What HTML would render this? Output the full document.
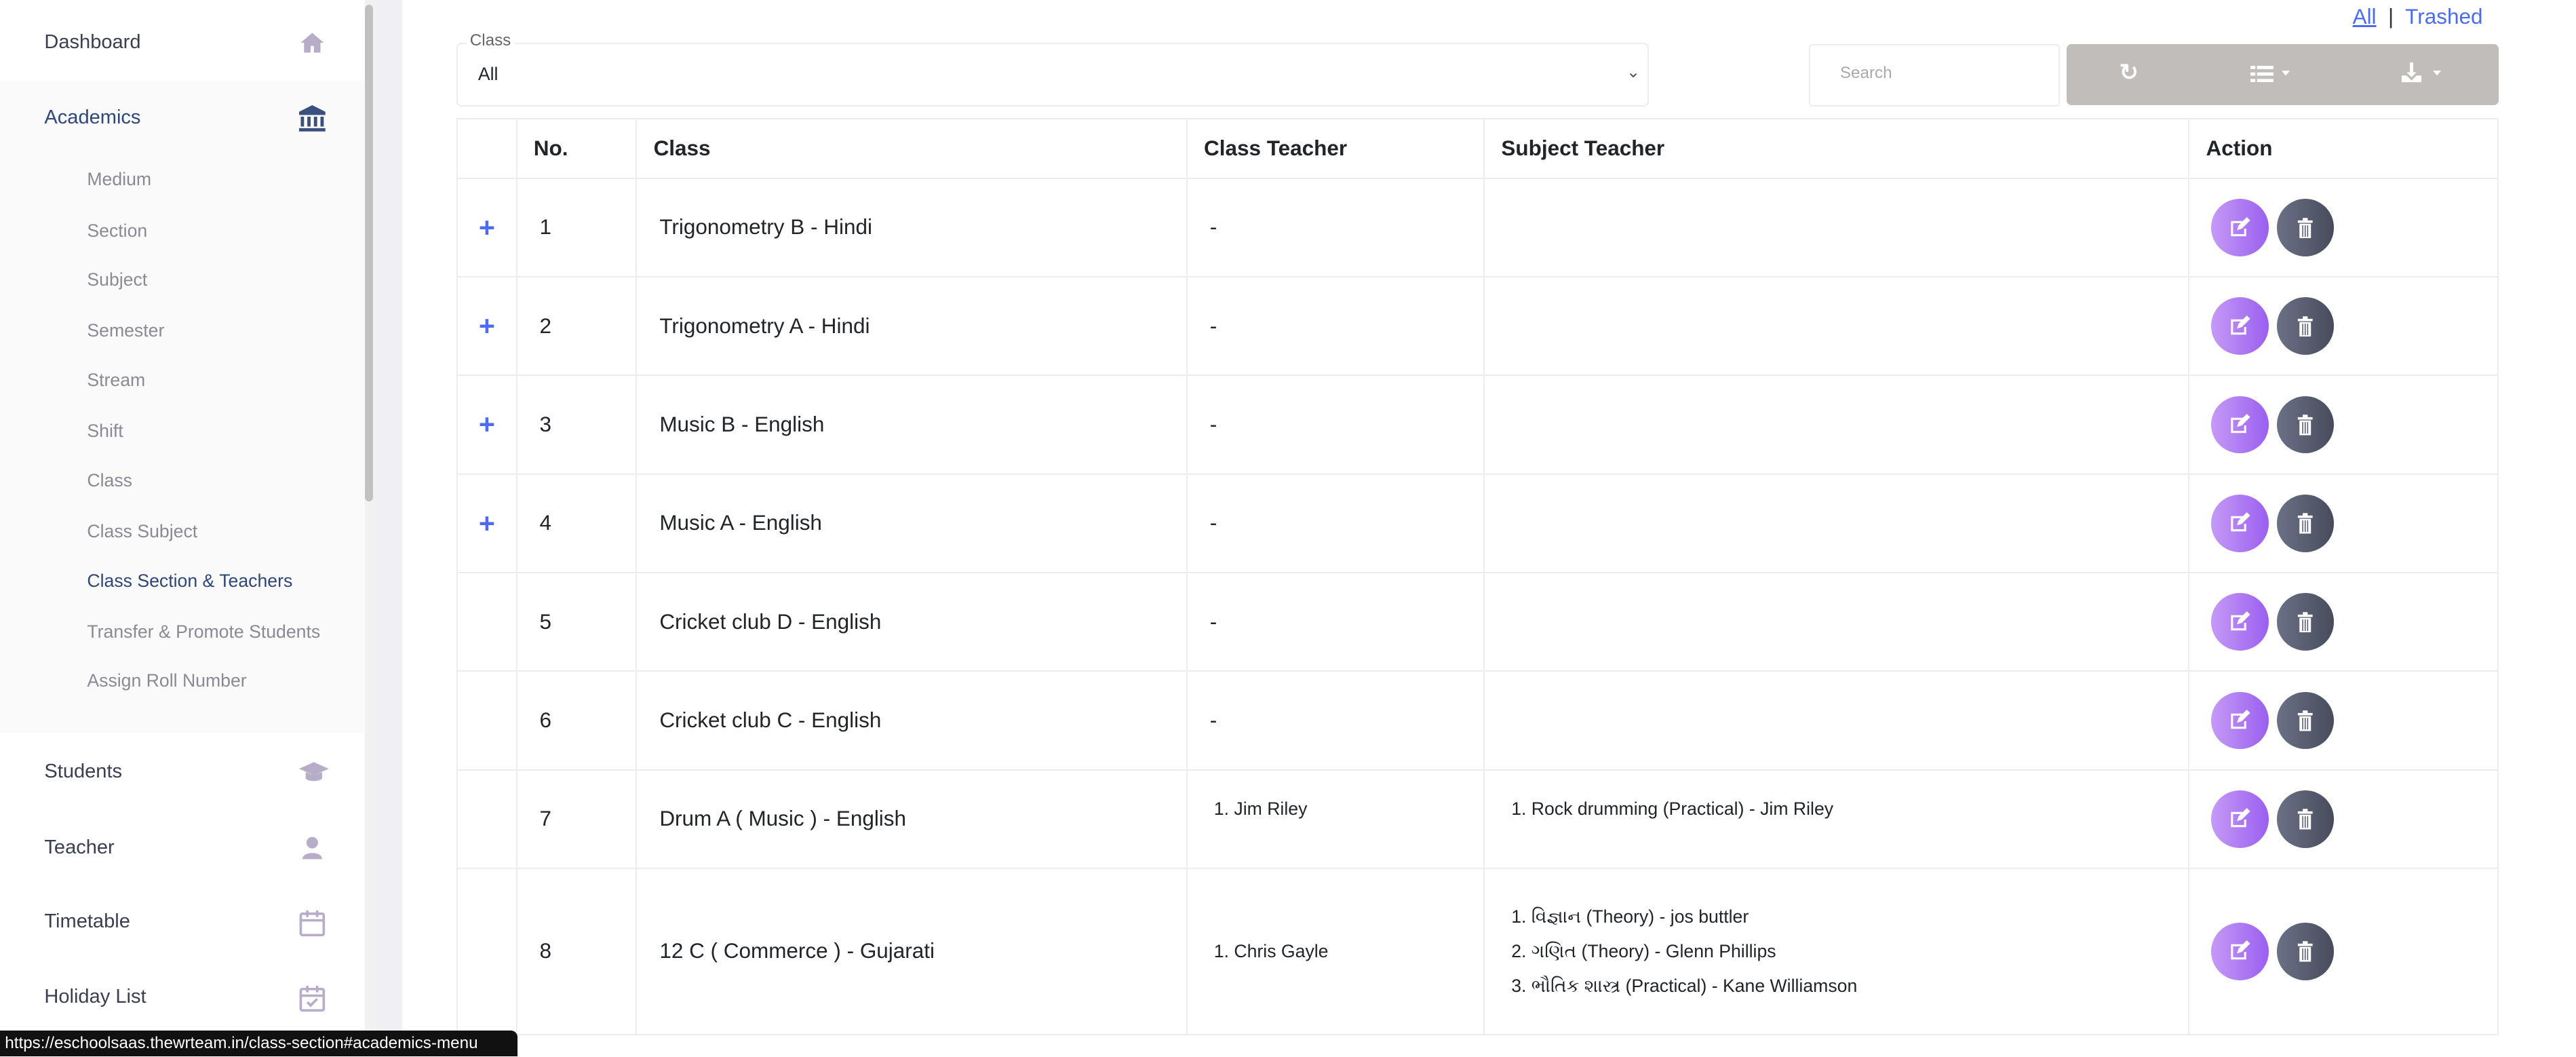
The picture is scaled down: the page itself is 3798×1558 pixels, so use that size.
<!DOCTYPE html>
<html><head><meta charset="utf-8"><style>
html,body{margin:0;padding:0;background:#fff;overflow:hidden}
#w{zoom:2.4222;width:1568px;height:643px;position:relative;font-family:"Liberation Sans","Noto Sans CJK JP",sans-serif;color:#212529;overflow:hidden}
.abs{position:absolute}
.side{left:0;top:0;width:222px;height:643px;background:#fff}
.nav{position:absolute;left:27px;font-size:12px;color:#3a3e52}
.sub{position:absolute;left:53px;font-size:11px;color:#8a8a95}
.ico{position:absolute;left:182px}
table{border-collapse:collapse;position:absolute;left:278px;top:72px;width:1243px;font-size:13px;table-layout:fixed}
td,th{border:1px solid #ebedf2;text-align:left;padding:0 10px;vertical-align:middle;box-sizing:border-box}
th{height:36px;font-weight:bold;font-size:13px}
tr.r td{height:60px}
.plus{color:#4b6cf0;font-weight:bold;font-size:17px;text-align:center;padding:0}
.act{padding-left:13px}
.btn{display:inline-block;width:35px;height:35px;border-radius:50%;vertical-align:middle;margin-right:5px;position:relative}
.e{background:linear-gradient(90deg,#c59af5,#9a5ff0)}
.d{background:linear-gradient(90deg,#6b7186,#474c5c)}
.btn svg{position:absolute;left:11px;top:11px}
.sm{font-size:11px}
.top{vertical-align:top;padding-top:17px}
</style></head><body><div id="w">
<div class="abs side"></div>
<div class="abs" style="left:0;top:49px;width:222px;height:397px;background:#fafafb"></div>
<div class="nav" style="top:19px">Dashboard</div>
<svg class="ico" style="top:19px" width="16" height="14" viewBox="0 0 16 14"><path d="M8 1L1 7h2v6h4V9h2v4h4V7h2z" fill="#b8adc8"/></svg>
<div class="nav" style="top:65px;color:#2e4678;">Academics</div>
<svg class="ico" style="top:64px" width="16" height="16" viewBox="0 0 16 16"><path d="M8 0L0 4v2h16V4z M1 7h2v6H1z M5 7h2v6H5z M9 7h2v6H9z M13 7h2v6h-2z M0 14h16v2H0z" fill="#3a5180"/></svg>
<div class="sub" style="top:103px">Medium</div>
<div class="sub" style="top:134px">Section</div>
<div class="sub" style="top:164px">Subject</div>
<div class="sub" style="top:195px">Semester</div>
<div class="sub" style="top:225px">Stream</div>
<div class="sub" style="top:256px">Shift</div>
<div class="sub" style="top:286px">Class</div>
<div class="sub" style="top:317px">Class Subject</div>
<div class="sub" style="top:347px;color:#2e4678">Class Section &amp; Teachers</div>
<div class="sub" style="top:378px">Transfer &amp; Promote Students</div>
<div class="sub" style="top:408px">Assign Roll Number</div>
<div class="nav" style="top:463px">Students</div>
<svg class="ico" style="top:463px" width="18" height="14" viewBox="0 0 18 14"><path d="M9 1L0 5l9 4 9-4z M4 7v4c2 2 8 2 10 0V7l-5 2z" fill="#b8adc8"/></svg>
<div class="nav" style="top:509px">Teacher</div>
<svg class="ico" style="top:508px" width="16" height="16" viewBox="0 0 16 16"><circle cx="8" cy="5" r="3.5" fill="#b8adc8"/><path d="M2 15c0-5 12-5 12 0z" fill="#b8adc8"/></svg>
<div class="nav" style="top:554px">Timetable</div>
<svg class="ico" style="top:554px" width="16" height="16" viewBox="0 0 16 16"><rect x="1" y="2" width="14" height="13" rx="1" fill="none" stroke="#b8adc8" stroke-width="1.5"/><path d="M1 6h14M5 0v4M11 0v4" stroke="#b8adc8" stroke-width="1.5"/></svg>
<div class="nav" style="top:600px">Holiday List</div>
<svg class="ico" style="top:600px" width="16" height="16" viewBox="0 0 16 16"><rect x="1" y="2" width="14" height="13" rx="1" fill="none" stroke="#b8adc8" stroke-width="1.5"/><path d="M1 6h14M5 0v4M11 0v4" stroke="#b8adc8" stroke-width="1.5"/><path d="M5 10l2 2 4-4" stroke="#b8adc8" fill="none" stroke-width="1.5"/></svg>
<div class="abs" style="left:222px;top:0;width:7px;height:643px;background:#f1f1f1"></div>
<div class="abs" style="left:222px;top:3px;width:5px;height:302px;background:#c1c1c1;border-radius:3px"></div>
<div class="abs" style="left:229px;top:0;width:16px;height:643px;background:#f0eff4"></div>
<div class="abs" style="left:1432px;top:3px;font-size:13px"><span style="color:#4b6cf0;text-decoration:underline">All</span> <span style="color:#333">&nbsp;|&nbsp;</span> <span style="color:#4b6cf0">Trashed</span></div>
<div class="abs" style="left:278px;top:26px;width:724px;height:37px;border:1px solid #ebedf2;border-radius:3px"></div>
<div class="abs" style="left:284px;top:19px;font-size:10px;color:#666;background:#fff;padding:0 2px">Class</div>
<div class="abs" style="left:291px;top:39px;font-size:11px">All</div>
<div class="abs" style="left:990px;top:38px;font-size:10px;color:#555">&#8964;</div>
<div class="abs" style="left:1101px;top:27px;width:151px;height:36px;border:1px solid #ebedf2;border-radius:2px"></div>
<div class="abs" style="left:1120px;top:39px;font-size:10px;color:#aaa">Search</div>
<div class="abs" style="left:1258px;top:27px;width:263px;height:37px;background:#c0bdbb;border-radius:3px"></div>
<div class="abs" style="left:1290px;top:36px;font-size:14px;color:#fff;font-weight:bold">&#8635;</div>
<svg class="abs" style="left:1370px;top:40px" width="26" height="10" viewBox="0 0 26 10"><path d="M0 0h3v2H0zM4 0h10v2H4zM0 4h3v2H0zM4 4h10v2H4zM0 8h3v2H0zM4 8h10v2H4z" fill="#fff"/><path d="M19 3h5l-2.5 3z" fill="#fff"/></svg>
<svg class="abs" style="left:1462px;top:38px" width="26" height="13" viewBox="0 0 26 13"><path d="M5 0h2v6h2L6 9 3 6h2z M0 8h3l3 3 3-3h3v4H0z" fill="#fff"/><path d="M19 5h5l-2.5 3z" fill="#fff"/></svg>
<table>
<colgroup><col style="width:36px"><col style="width:73px"><col style="width:335px"><col style="width:181px"><col style="width:429px"><col></colgroup>
<tr><th></th><th>No.</th><th>Class</th><th>Class Teacher</th><th>Subject Teacher</th><th>Action</th></tr>
<tr class="r"><td class="plus">+</td><td>&nbsp;1</td><td>&nbsp;Trigonometry B - Hindi</td><td>&nbsp;-</td><td></td><td class="act"><span class="btn e"><svg width="13" height="13" viewBox="0 0 13 13"><path d="M9 3H2v8h8V7" fill="none" stroke="#fff" stroke-width="1.3"/><path d="M5 8l1-3 5-5 2 2-5 5z" fill="#fff"/></svg></span><span class="btn d"><svg width="13" height="13" viewBox="0 0 13 13"><path d="M2 2h9v1.5H2zM5 0.5h3v1.5H5zM3 4h7v9H3z" fill="#fff"/><path d="M5 5v7M6.5 5v7M8 5v7" stroke="#4d5262" stroke-width="0.6"/></svg></span></td></tr>
<tr class="r"><td class="plus">+</td><td>&nbsp;2</td><td>&nbsp;Trigonometry A - Hindi</td><td>&nbsp;-</td><td></td><td class="act"><span class="btn e"><svg width="13" height="13" viewBox="0 0 13 13"><path d="M9 3H2v8h8V7" fill="none" stroke="#fff" stroke-width="1.3"/><path d="M5 8l1-3 5-5 2 2-5 5z" fill="#fff"/></svg></span><span class="btn d"><svg width="13" height="13" viewBox="0 0 13 13"><path d="M2 2h9v1.5H2zM5 0.5h3v1.5H5zM3 4h7v9H3z" fill="#fff"/><path d="M5 5v7M6.5 5v7M8 5v7" stroke="#4d5262" stroke-width="0.6"/></svg></span></td></tr>
<tr class="r"><td class="plus">+</td><td>&nbsp;3</td><td>&nbsp;Music B - English</td><td>&nbsp;-</td><td></td><td class="act"><span class="btn e"><svg width="13" height="13" viewBox="0 0 13 13"><path d="M9 3H2v8h8V7" fill="none" stroke="#fff" stroke-width="1.3"/><path d="M5 8l1-3 5-5 2 2-5 5z" fill="#fff"/></svg></span><span class="btn d"><svg width="13" height="13" viewBox="0 0 13 13"><path d="M2 2h9v1.5H2zM5 0.5h3v1.5H5zM3 4h7v9H3z" fill="#fff"/><path d="M5 5v7M6.5 5v7M8 5v7" stroke="#4d5262" stroke-width="0.6"/></svg></span></td></tr>
<tr class="r"><td class="plus">+</td><td>&nbsp;4</td><td>&nbsp;Music A - English</td><td>&nbsp;-</td><td></td><td class="act"><span class="btn e"><svg width="13" height="13" viewBox="0 0 13 13"><path d="M9 3H2v8h8V7" fill="none" stroke="#fff" stroke-width="1.3"/><path d="M5 8l1-3 5-5 2 2-5 5z" fill="#fff"/></svg></span><span class="btn d"><svg width="13" height="13" viewBox="0 0 13 13"><path d="M2 2h9v1.5H2zM5 0.5h3v1.5H5zM3 4h7v9H3z" fill="#fff"/><path d="M5 5v7M6.5 5v7M8 5v7" stroke="#4d5262" stroke-width="0.6"/></svg></span></td></tr>
<tr class="r"><td></td><td>&nbsp;5</td><td>&nbsp;Cricket club D - English</td><td>&nbsp;-</td><td></td><td class="act"><span class="btn e"><svg width="13" height="13" viewBox="0 0 13 13"><path d="M9 3H2v8h8V7" fill="none" stroke="#fff" stroke-width="1.3"/><path d="M5 8l1-3 5-5 2 2-5 5z" fill="#fff"/></svg></span><span class="btn d"><svg width="13" height="13" viewBox="0 0 13 13"><path d="M2 2h9v1.5H2zM5 0.5h3v1.5H5zM3 4h7v9H3z" fill="#fff"/><path d="M5 5v7M6.5 5v7M8 5v7" stroke="#4d5262" stroke-width="0.6"/></svg></span></td></tr>
<tr class="r"><td></td><td>&nbsp;6</td><td>&nbsp;Cricket club C - English</td><td>&nbsp;-</td><td></td><td class="act"><span class="btn e"><svg width="13" height="13" viewBox="0 0 13 13"><path d="M9 3H2v8h8V7" fill="none" stroke="#fff" stroke-width="1.3"/><path d="M5 8l1-3 5-5 2 2-5 5z" fill="#fff"/></svg></span><span class="btn d"><svg width="13" height="13" viewBox="0 0 13 13"><path d="M2 2h9v1.5H2zM5 0.5h3v1.5H5zM3 4h7v9H3z" fill="#fff"/><path d="M5 5v7M6.5 5v7M8 5v7" stroke="#4d5262" stroke-width="0.6"/></svg></span></td></tr>
<tr class="r"><td></td><td>&nbsp;7</td><td>&nbsp;Drum A ( Music ) - English</td><td class="sm top">&nbsp;&nbsp;1. Jim Riley</td><td class="sm top">&nbsp;&nbsp;1. Rock drumming (Practical) - Jim Riley</td><td class="act"><span class="btn e"><svg width="13" height="13" viewBox="0 0 13 13"><path d="M9 3H2v8h8V7" fill="none" stroke="#fff" stroke-width="1.3"/><path d="M5 8l1-3 5-5 2 2-5 5z" fill="#fff"/></svg></span><span class="btn d"><svg width="13" height="13" viewBox="0 0 13 13"><path d="M2 2h9v1.5H2zM5 0.5h3v1.5H5zM3 4h7v9H3z" fill="#fff"/><path d="M5 5v7M6.5 5v7M8 5v7" stroke="#4d5262" stroke-width="0.6"/></svg></span></td></tr>
<tr><td style="height:101px"></td><td>&nbsp;8</td><td>&nbsp;12 C ( Commerce ) - Gujarati</td><td class="sm">&nbsp;&nbsp;1. Chris Gayle</td><td class="sm" style="line-height:21px">&nbsp;&nbsp;1. વિજ્ઞાન (Theory) - jos buttler<br>&nbsp;&nbsp;2. ગણિત (Theory) - Glenn Phillips<br>&nbsp;&nbsp;3. ભૌતિક શાસ્ત્ર (Practical) - Kane Williamson</td><td class="act"><span class="btn e"><svg width="13" height="13" viewBox="0 0 13 13"><path d="M9 3H2v8h8V7" fill="none" stroke="#fff" stroke-width="1.3"/><path d="M5 8l1-3 5-5 2 2-5 5z" fill="#fff"/></svg></span><span class="btn d"><svg width="13" height="13" viewBox="0 0 13 13"><path d="M2 2h9v1.5H2zM5 0.5h3v1.5H5zM3 4h7v9H3z" fill="#fff"/><path d="M5 5v7M6.5 5v7M8 5v7" stroke="#4d5262" stroke-width="0.6"/></svg></span></td></tr>
</table>
<div class="abs" style="left:0;top:627px;width:315px;height:16px;background:#111;border-radius:0 4px 0 0;color:#fff;font-size:10px;line-height:16px;padding-left:3px;box-sizing:border-box">https://eschoolsaas.thewrteam.in/class-section#academics-menu</div>
</div></body></html>
